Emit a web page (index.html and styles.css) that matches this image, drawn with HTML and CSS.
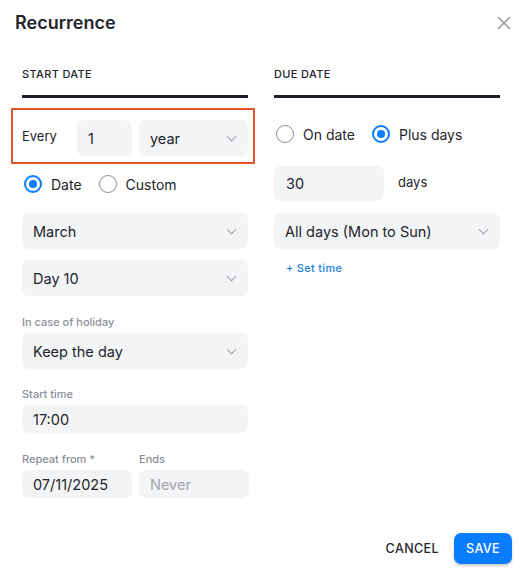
FILE: index.html
```html
<!DOCTYPE html>
<html lang="en">
<head>
<meta charset="utf-8">
<title>Recurrence</title>
<link rel="stylesheet" href="styles.css">
</head>
<body>
<div class="dialog">
  <div class="header">
    <h1 class="title">Recurrence</h1>
    <button class="close" aria-label="Close">
      <svg width="14" height="14" viewBox="0 0 14 14"><path d="M1.5 1.5 L12.5 12.5 M12.5 1.5 L1.5 12.5" stroke="#8e9097" stroke-width="1.4" fill="none" stroke-linecap="round"/></svg>
    </button>
  </div>

  <div class="columns">
    <section class="col">
      <div class="tab">START DATE</div>

      <div class="every-row">
        <span class="every-label">Every</span>
        <div class="field num">1</div>
        <div class="field select unit">year<span class="chev"></span></div>
        <div class="highlight"></div>
      </div>

      <div class="radio-row left-radios">
        <label class="radio"><span class="dot checked"></span>Date</label>
        <label class="radio"><span class="dot"></span>Custom</label>
      </div>

      <div class="field select block month">March<span class="chev"></span></div>
      <div class="field select block day">Day 10<span class="chev"></span></div>

      <div class="label holiday-label">In case of holiday</div>
      <div class="field select block">Keep the day<span class="chev"></span></div>

      <div class="label time-label">Start time</div>
      <div class="field small block">17:00</div>

      <div class="pair">
        <div class="pair-item">
          <div class="label">Repeat from *</div>
          <div class="field small">07/11/2025</div>
        </div>
        <div class="pair-item">
          <div class="label">Ends</div>
          <div class="field small placeholder">Never</div>
        </div>
      </div>
    </section>

    <section class="col">
      <div class="tab">DUE DATE</div>

      <div class="radio-row right-radios">
        <label class="radio"><span class="dot"></span>On date</label>
        <label class="radio"><span class="dot checked"></span>Plus days</label>
      </div>

      <div class="days-row">
        <div class="field days-input">30</div>
        <span class="days-text">days</span>
      </div>

      <div class="field select block alldays">All days (Mon to Sun)<span class="chev"></span></div>

      <a class="set-time">+ Set time</a>
    </section>
  </div>

  <div class="footer">
    <button class="btn-cancel">CANCEL</button>
    <button class="btn-save">SAVE</button>
  </div>
</div>
</body>
</html>
```

FILE: styles.css
```css
* { box-sizing: border-box; }

body {
  margin: 0;
  background: #ffffff;
  font-family: Inter, "Noto Sans", "Liberation Sans", sans-serif;
  color: #23252d;
}

.dialog {
  width: 527px;
  height: 574px;
  background: #ffffff;
}

.header {
  display: flex;
  justify-content: space-between;
  align-items: flex-start;
  padding: 12px 16px 0 15px;
  height: 67px;
}

.title {
  margin: 0;
  font-size: 18px;
  line-height: 22px;
  font-weight: 600;
  color: #24262e;
}

.close {
  border: 0;
  background: none;
  padding: 0;
  margin-top: 4px;
  width: 14px;
  height: 14px;
  cursor: pointer;
}

.columns {
  display: grid;
  grid-template-columns: 226px 226px;
  column-gap: 26px;
  padding-left: 22px;
}

.col {
  display: flex;
  flex-direction: column;
}

.tab {
  font-size: 11px;
  line-height: 14px;
  font-weight: 500;
  color: #23252d;
  letter-spacing: 0.35px;
  padding-bottom: 14px;
  border-bottom: 3px solid #1d1e2c;
}

.field {
  background: #f3f4f6;
  border-radius: 7px;
  height: 36px;
  padding: 0 11px;
  display: flex;
  align-items: center;
  font-size: 14.5px;
  color: #23252d;
}

.field.small {
  height: 28px;
  font-size: 14.5px;
}

.field.placeholder {
  color: #a3a6ad;
}

.select {
  position: relative;
}

.chev {
  position: absolute;
  right: 13px;
  top: 50%;
  width: 7px;
  height: 7px;
  margin-top: -5px;
  border-right: 1.3px solid #9ea2aa;
  border-bottom: 1.3px solid #9ea2aa;
  transform: rotate(45deg);
}

/* Every row */
.every-row {
  position: relative;
  margin-top: 22px;
  display: flex;
  align-items: center;
  height: 36px;
}

.every-label {
  font-size: 13px;
  width: 55px;
  margin-top: -4px;
}

.num {
  width: 55px;
}

.unit {
  width: 109px;
  margin-left: 7px;
}

.highlight {
  position: absolute;
  left: -11px;
  right: -7px;
  top: -12px;
  bottom: -8px;
  border: 2px solid #e5522b;
  pointer-events: none;
}

/* radios */
.radio-row {
  display: flex;
  align-items: center;
  height: 20px;
}

.left-radios {
  margin-top: 18px;
  padding-left: 2px;
}

.right-radios {
  margin-top: 26px;
  padding-left: 2px;
}

.radio {
  display: flex;
  align-items: center;
  font-size: 14px;
  color: #23252d;
  margin-right: 17px;
}

.dot {
  width: 18px;
  height: 18px;
  border-radius: 50%;
  border: 1.5px solid #8f9196;
  margin-right: 9px;
  position: relative;
  flex: none;
}

.dot.checked {
  border: 2px solid #0a7cff;
}

.dot.checked::after {
  content: "";
  position: absolute;
  left: 3px;
  top: 3px;
  width: 8px;
  height: 8px;
  border-radius: 50%;
  background: #0a7cff;
}

.month { margin-top: 19px; }
.day { margin-top: 11px; }

.label {
  font-size: 11px;
  line-height: 14px;
  font-weight: 500;
  color: #8b8f98;
  margin-bottom: 4px;
}

.holiday-label { margin-top: 19px; }
.time-label { margin-top: 18px; }

.pair {
  margin-top: 19px;
  display: grid;
  grid-template-columns: 110px 110px;
  column-gap: 7px;
}

/* right column */
.days-row {
  margin-top: 22px;
  display: flex;
  align-items: center;
}

.days-input {
  width: 110px;
  padding-left: 12px;
  height: 35px;
}

.days-text {
  margin-left: 14px;
  font-size: 13px;
  margin-top: -4px;
}

.alldays { margin-top: 12px; }

.set-time {
  margin-top: 12px;
  padding-left: 12px;
  font-size: 11px;
  line-height: 14px;
  font-weight: 500;
  letter-spacing: 0.3px;
  color: #1f7fe0;
  cursor: pointer;
}

/* footer */
.footer {
  display: flex;
  justify-content: flex-end;
  align-items: center;
  padding-right: 15px;
  margin-top: 35px;
  gap: 6px;
}

.btn-cancel {
  border: 0;
  background: none;
  font-family: inherit;
  font-size: 12.5px;
  font-weight: 500;
  letter-spacing: 0.4px;
  color: #23252d;
  padding: 8px 9px;
  cursor: pointer;
}

.btn-save {
  border: 0;
  border-radius: 7px;
  background: #0a7cff;
  color: #ffffff;
  font-family: inherit;
  font-size: 12.5px;
  font-weight: 500;
  letter-spacing: 0.4px;
  width: 58px;
  height: 31px;
  box-shadow: 0 2px 3px rgba(0, 0, 0, 0.2);
  cursor: pointer;
}
```
